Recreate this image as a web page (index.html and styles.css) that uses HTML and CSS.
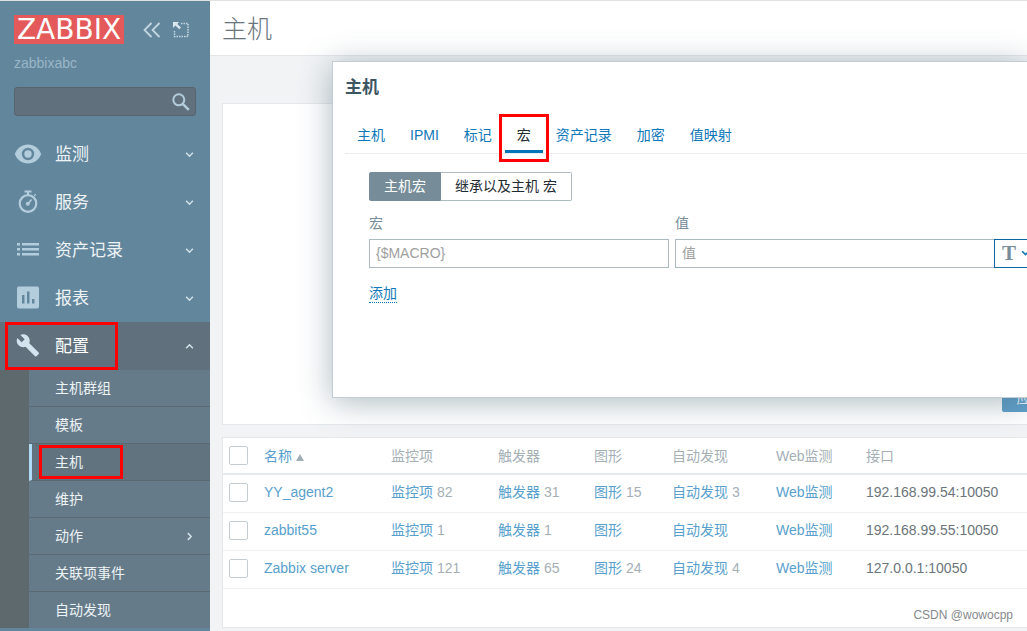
FILE: index.html
```
<!DOCTYPE html>
<html lang="zh-CN">
<head>
<meta charset="utf-8">
<title>主机</title>
<link rel="stylesheet" href="styles.css">
</head>
<body>
<div class="app">
  <aside class="sidebar">
    <div class="brand">
      <a class="logo" href="#">ZABBIX</a>
      <button class="icon-btn collapse" type="button" aria-label="折叠">
        <svg width="18" height="16" viewBox="0 0 18 16"><path d="M8.500 1 1.500 8l7 7M16.500 1l-7 7 7 7" fill="none" stroke="#c3d6e1" stroke-width="1.800"/></svg>
      </button>
      <button class="icon-btn" type="button" aria-label="隐藏">
        <svg width="16" height="16" viewBox="0 0 16 16"><path d="M8 1.500h7v13H1.500V8" fill="none" stroke="#c3d6e1" stroke-width="1.500" stroke-dasharray="1.500 1"/><path d="M0 0h6L4.300 1.900 8 5.600 6.300 7.300 2.400 3.500 0 6z" fill="#dbe8ef"/></svg>
      </button>
    </div>
    <div class="server">zabbixabc</div>
    <form class="search">
      <input class="search-input" type="text" aria-label="搜索">
      <button class="icon-btn" type="button" aria-label="搜索">
        <svg width="18" height="18" viewBox="0 0 18 18" fill="none" stroke="#b3cddd"><circle cx="6.800" cy="6.800" r="5.500" stroke-width="2"/><path d="m10.800 10.800 6 6" stroke-width="2.600"/></svg>
      </button>
    </form>
    <nav class="menu">
      <a class="menu-item" href="#">
        <svg class="menu-icon" viewBox="0 0 28 28"><path fill="#b3cddd" fill-rule="evenodd" d="M14 4.500C8 4.500 3 8.300.800 14 3 19.700 8 23.500 14 23.500S25 19.700 27.200 14C25 8.300 20 4.500 14 4.500zm0 15.700a6.200 6.200 0 1 1 0-12.400 6.200 6.200 0 0 1 0 12.400zm0-2.500a3.700 3.700 0 1 0 0-7.400 3.700 3.700 0 0 0 0 7.400z"/></svg>
        <span class="menu-text">监测</span>
        <svg class="arrow" viewBox="0 0 8 8"><path d="m1 2.500 3 3 3-3"/></svg>
      </a>
      <a class="menu-item" href="#">
        <svg class="menu-icon" viewBox="0 0 28 28" fill="none" stroke="#b3cddd"><circle cx="14" cy="15.500" r="8.300" stroke-width="2.200"/><path d="M10.500 3.500h7M14 4v3M20.500 6.500l1 1" stroke-width="2"/><path d="m17.500 11.500-4 5" stroke-width="1.600"/><circle cx="13.800" cy="15.700" r="2" fill="#b3cddd" stroke="none"/></svg>
        <span class="menu-text">服务</span>
        <svg class="arrow" viewBox="0 0 8 8"><path d="m1 2.500 3 3 3-3"/></svg>
      </a>
      <a class="menu-item" href="#">
        <svg class="menu-icon" viewBox="0 0 28 28" fill="#b3cddd"><path d="M3 7h3v2.500H3zM8 7h17v2.500H8zM3 12h3v2.500H3zM8 12h17v2.500H8zM3 17h3v2.500H3zM8 17h17v2.500H8z"/></svg>
        <span class="menu-text">资产记录</span>
        <svg class="arrow" viewBox="0 0 8 8"><path d="m1 2.500 3 3 3-3"/></svg>
      </a>
      <a class="menu-item" href="#">
        <svg class="menu-icon" viewBox="0 0 28 28"><path fill="#b3cddd" fill-rule="evenodd" d="M5 2.500h18a2 2 0 0 1 2 2v18a2 2 0 0 1-2 2H5a2 2 0 0 1-2-2v-18a2 2 0 0 1 2-2zM8 11v8.500h2.500V11zM13 7.500v12h2.500v-12zM18 15v4.500h2.500V15z"/></svg>
        <span class="menu-text">报表</span>
        <svg class="arrow" viewBox="0 0 8 8"><path d="m1 2.500 3 3 3-3"/></svg>
      </a>
      <a class="menu-item menu-item-open" href="#">
        <svg class="menu-icon" viewBox="0 0 28 28"><path fill="#d3e4ef" d="M24.700 20.600 15.300 11.200c.900-2.400.400-5.100-1.500-7-2-2-5-2.400-7.400-1.300l4.300 4.300-3 3L3.300 5.900C2.200 8.300 2.600 11.300 4.600 13.300c1.900 1.900 4.600 2.400 7 1.500l9.400 9.400c.4.400 1 .4 1.400 0l2.300-2.300c.4-.3.400-.9 0-1.300z"/></svg>
        <span class="menu-text">配置</span>
        <svg class="arrow" viewBox="0 0 8 8"><path d="m1 5.500 3-3 3 3"/></svg>
        <span class="mark mark-menu"></span>
      </a>
      <div class="submenu">
        <a class="sub-item" href="#">主机群组</a>
        <a class="sub-item" href="#">模板</a>
        <a class="sub-item sub-item-current" href="#">主机<span class="mark mark-sub"></span></a>
        <a class="sub-item" href="#">维护</a>
        <a class="sub-item" href="#">动作<svg class="arrow" viewBox="0 0 8 8"><path d="m2.500 1 3 3-3 3"/></svg></a>
        <a class="sub-item" href="#">关联项事件</a>
        <a class="sub-item" href="#">自动发现</a>
      </div>
    </nav>
  </aside>

  <main class="main">
    <header class="page-head"><h1 class="page-title">主机</h1></header>
    <section class="filter"><button class="apply" type="button">应用</button></section>
    <section class="list">
      <table class="hosts">
        <colgroup><col class="c-check"><col class="c-name"><col class="c-items"><col class="c-trig"><col class="c-graph"><col class="c-disc"><col class="c-web"><col></colgroup>
        <thead>
          <tr><th><input class="check" type="checkbox" aria-label="全选"></th><th><a class="link" href="#">名称<span class="sort"></span></a></th><th>监控项</th><th>触发器</th><th>图形</th><th>自动发现</th><th>Web监测</th><th>接口</th></tr>
        </thead>
        <tbody>
          <tr><td><input class="check" type="checkbox" aria-label="YY_agent2"></td><td><a class="link" href="#">YY_agent2</a></td><td><a class="link" href="#">监控项</a> 82</td><td><a class="link" href="#">触发器</a> 31</td><td><a class="link" href="#">图形</a> 15</td><td><a class="link" href="#">自动发现</a> 3</td><td><a class="link" href="#">Web监测</a></td><td class="addr">192.168.99.54:10050</td></tr>
          <tr><td><input class="check" type="checkbox" aria-label="zabbit55"></td><td><a class="link" href="#">zabbit55</a></td><td><a class="link" href="#">监控项</a> 1</td><td><a class="link" href="#">触发器</a> 1</td><td><a class="link" href="#">图形</a></td><td><a class="link" href="#">自动发现</a></td><td><a class="link" href="#">Web监测</a></td><td class="addr">192.168.99.55:10050</td></tr>
          <tr><td><input class="check" type="checkbox" aria-label="Zabbix server"></td><td><a class="link" href="#">Zabbix server</a></td><td><a class="link" href="#">监控项</a> 121</td><td><a class="link" href="#">触发器</a> 65</td><td><a class="link" href="#">图形</a> 24</td><td><a class="link" href="#">自动发现</a> 4</td><td><a class="link" href="#">Web监测</a></td><td class="addr">127.0.0.1:10050</td></tr>
        </tbody>
      </table>
    </section>

    <div class="dialog" role="dialog" aria-labelledby="dialog-title">
      <h2 class="dialog-title" id="dialog-title">主机</h2>
      <nav class="tabs">
        <a class="tab" href="#">主机</a>
        <a class="tab" href="#">IPMI</a>
        <a class="tab" href="#">标记</a>
        <a class="tab tab-current" href="#">宏<span class="mark mark-tab"></span></a>
        <a class="tab" href="#">资产记录</a>
        <a class="tab" href="#">加密</a>
        <a class="tab" href="#">值映射</a>
      </nav>
      <form class="macros">
        <div class="segments">
          <input class="seg-radio" type="radio" name="scope" id="scope-host" checked><label class="seg" for="scope-host">主机宏</label>
          <input class="seg-radio" type="radio" name="scope" id="scope-all"><label class="seg" for="scope-all">继承以及主机 宏</label>
        </div>
        <div class="fields">
          <label class="field-label" for="macro">宏</label>
          <label class="field-label" for="value">值</label>
          <input class="field" id="macro" type="text" placeholder="{$MACRO}">
          <div class="value">
            <input class="field" id="value" type="text" placeholder="值">
            <button class="type" type="button" aria-label="类型"><span>T</span><svg class="type-arrow" viewBox="0 0 8 8"><path d="m1 2 3 3 3-3"/></svg></button>
          </div>
        </div>
        <button class="add" type="button">添加</button>
      </form>
    </div>
    <div class="credit">CSDN @wowocpp</div>
  </main>
</div>
</body>
</html>
```
FILE: styles.css
```
* { box-sizing: border-box; }
body {
  margin: 0;
  font: 14px/20px "Liberation Sans", "Noto Sans CJK SC", sans-serif;
  color: #1f2c33;
  background: #f1f3f5;
}
a { text-decoration: none; color: inherit; }
button, input { font: inherit; }
button { padding: 0; border: 0; background: none; cursor: pointer; }
h1, h2 { margin: 0; }

.app {
  display: flex;
  height: 100vh;
  border-top: 1px solid #dfe1e2;
  overflow: hidden;
}

/* Sidebar */
.sidebar { flex: 0 0 210px; min-width: 0; background: #62869c; color: #eef3f6; }
.brand { display: flex; align-items: center; padding: 14px 14px 0; }
.logo {
  flex: none;
  width: 110px;
  background: #e45959;
  color: #fff;
  font: 28px/29px "DejaVu Sans", sans-serif;
  text-align: center;
}
.icon-btn { display: flex; flex: none; }
.collapse { margin: 0 12px 0 19px; }
.server { padding: 9px 14px 0; color: #9ab7c8; }
.search {
  display: flex;
  align-items: center;
  margin: 14px 14px 0;
  padding-right: 5px;
  height: 29px;
  border: 1px solid #56656d;
  border-radius: 3px;
  background: #60717d;
}
.search-input { flex: 1; min-width: 0; border: 0; background: none; color: #fff; outline: 0; }
.menu { padding-top: 14px; }
.menu-item {
  position: relative;
  display: flex;
  align-items: center;
  height: 48px;
  padding: 0 16px 0 14px;
  font-size: 17px;
}
.menu-item-open { background: #60717d; color: #fff; }
.menu-icon { width: 28px; height: 28px; margin-right: 13px; }
.menu-text { flex: 1; padding-top: 2px; }
.arrow { width: 9px; height: 9px; fill: none; stroke: #d3e2eb; stroke-width: 1.3; }
.submenu { border-left: 29px solid #5e696e; background: #657b89; }
.sub-item {
  position: relative;
  display: flex;
  align-items: center;
  justify-content: space-between;
  height: 37px;
  padding: 0 16px 0 26px;
  border-bottom: 1px solid #5b6971;
}
.sub-item:last-child { height: 36px; border-bottom: 0; }
.sub-item-current { padding-left: 23px; border-left: 3px solid #b0dcf8; background: #60737f; }

/* Highlight frames */
.mark { position: absolute; border: 3px solid #f00; pointer-events: none; }
.mark-menu { left: 5px; top: 0; width: 113px; height: 48px; }
.mark-sub { left: 7px; top: 1px; width: 84px; height: 34px; }
.mark-tab { inset: -3px -6px -9px; }

/* Page */
.main { position: relative; flex: 1; min-width: 0; overflow: hidden; }
.page-head { height: 55px; padding: 9px 12px; border-bottom: 1px solid #e4e7ea; background: #fff; }
.page-title { font-size: 25px; line-height: 38px; font-weight: 300; color: #69757c; }
.filter {
  display: flex;
  justify-content: flex-end;
  align-items: flex-end;
  min-height: 322px;
  margin: 47px 0 0 12px;
  padding-bottom: 12px;
  border: 1px solid #e4e8eb;
  border-right: 0;
  background: #fff;
}
.apply {
  flex: none;
  width: 57px;
  height: 29px;
  margin-right: -32px;
  border-radius: 2px;
  background: #5f9fc9;
  color: #e8f2f8;
}
.list {
  margin: 12px 0 0 12px;
  padding-bottom: 38px;
  border: 1px solid #e4e8eb;
  border-right: 0;
  background: #fff;
}
.hosts { width: 100%; table-layout: fixed; border-collapse: separate; border-spacing: 0; color: #a4afb6; }
.hosts th, .hosts td {
  height: 38px;
  padding: 0 0 3px 6px;
  border-bottom: 1px solid #eff1f3;
  text-align: left;
  font-weight: 400;
  white-space: nowrap;
}
.hosts th { height: 37px; padding-bottom: 0; border-bottom: 2px solid #e6eaed; }
.c-check { width: 35px; }
.c-name { width: 127px; }
.c-items { width: 107px; }
.c-trig { width: 96px; }
.c-graph { width: 78px; }
.c-disc { width: 104px; }
.c-web { width: 90px; }
.link { color: #589fcd; }
.hosts .addr { color: #6b757b; }
.sort {
  display: inline-block;
  margin-left: 4px;
  border: 4px solid transparent;
  border-top: 0;
  border-bottom: 7px solid #a0aeb6;
}
.check {
  display: block;
  appearance: none;
  width: 19px;
  height: 19px;
  margin: 0;
  border: 1px solid #c3cdd2;
  border-radius: 2px;
  background: #fff;
}

/* Dialog */
.dialog {
  position: absolute;
  top: 60px;
  left: 122px;
  right: 0;
  min-height: 337px;
  padding: 14px 0 0 12px;
  border: 1px solid #c3ced4;
  border-right: 0;
  background: #fff;
  box-shadow: 0 4px 30px rgba(70, 100, 115, .45);
}
.dialog-title { font-size: 17px; line-height: 24px; color: #3c5563; }
.tabs { display: flex; gap: 1px; padding-top: 17px; border-bottom: 1px solid #ebeef0; }
.tab { position: relative; padding: 8px 12px; color: #0f78b8; }
.tab-current { color: #1f2c33; }
.tab-current::before {
  content: "";
  position: absolute;
  inset: auto 0 0;
  height: 3px;
  background: #0275b8;
}
.macros { padding: 18px 0 0 24px; }
.segments { display: flex; }
.seg-radio { position: absolute; opacity: 0; }
.seg {
  padding: 0 14px;
  border: 1px solid #acbbc2;
  border-left: 0;
  border-radius: 0 2px 2px 0;
  line-height: 27px;
}
.seg:first-of-type { border: 1px solid #768d99; border-radius: 2px 0 0 2px; }
.seg-radio:checked + .seg { background: #768d99; color: #fff; }
.fields {
  display: grid;
  grid-template-columns: 300px 1fr;
  column-gap: 6px;
  row-gap: 6px;
  margin-top: 12px;
}
.field-label { color: #768d99; }
.field {
  flex: 1;
  min-width: 0;
  height: 29px;
  padding: 0 6px 2px;
  border: 1px solid #acbbc2;
  background: #fff;
}
.field::placeholder { color: #a0a0a0; }
.value { display: flex; }
.value .field { border-right: 0; }
.type {
  display: flex;
  align-items: center;
  gap: 5px;
  width: 33px;
  padding-left: 7px;
  border: 1px solid #0a66a0;
  border-right: 0;
  overflow: hidden;
  font: bold 21px/27px "Liberation Serif", serif;
  color: #768d99;
}
.type-arrow { flex: none; width: 9px; height: 9px; fill: none; stroke: #0f78b8; stroke-width: 1.5; }
.add {
  margin-top: 16px;
  border-bottom: 1px dotted #0275b8;
  line-height: 18px;
  color: #0f78b8;
}
.credit { position: absolute; right: 14px; bottom: 6px; font-size: 12px; color: #85898c; }
```
